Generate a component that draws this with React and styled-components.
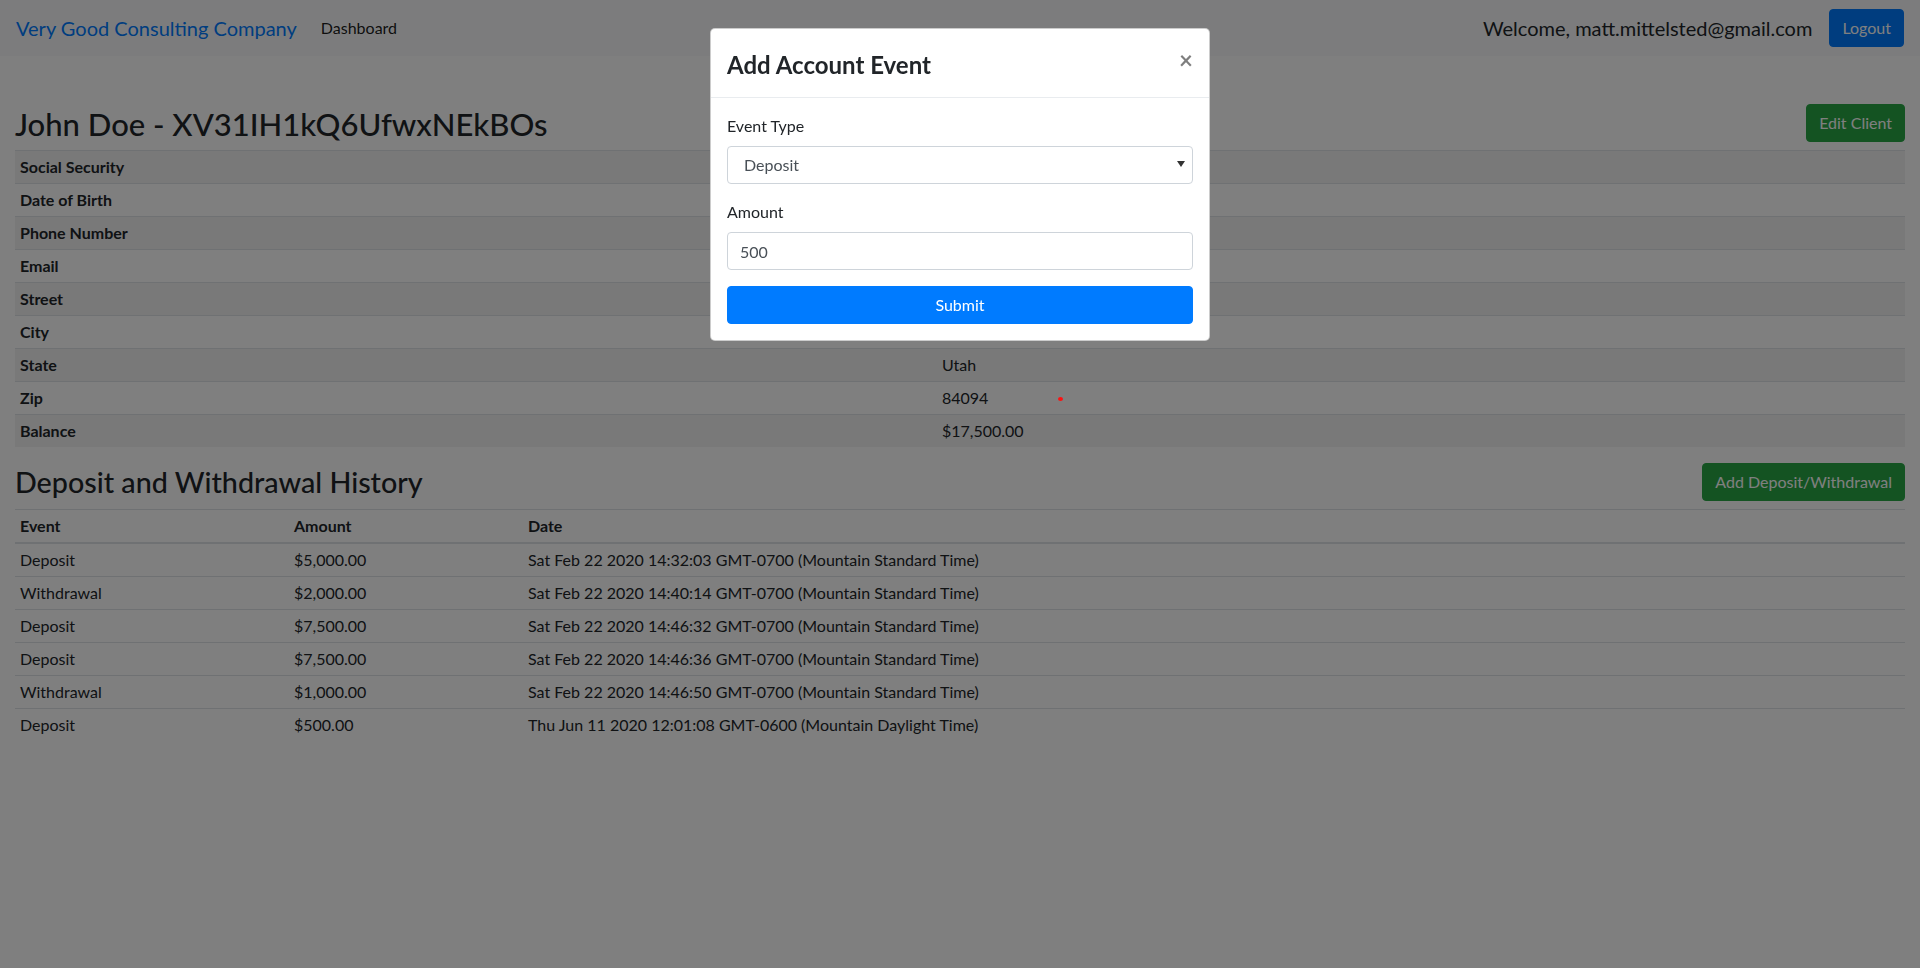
import React from "react";
import styled, { createGlobalStyle, css } from "styled-components";

const GlobalStyle = createGlobalStyle`
  *, *::before, *::after { box-sizing: border-box; }
  html, body { margin: 0; padding: 0; }
  body {
    font-family: Lato, "Open Sans", "Noto Sans", sans-serif;
    font-size: 16px;
    line-height: 1.5;
    color: #212529;
    background: #fff;
  }
`;

const Navbar = styled.nav`
  display: flex;
  align-items: center;
  height: 56px;
  padding: 8px 16px;
  background: #f8f9fa;
`;

const Brand = styled.a`
  font-size: 20px;
  line-height: 30px;
  color: #007bff;
  margin-right: 16px;
  text-decoration: none;
`;

const NavLink = styled.a`
  padding: 8px;
  color: rgba(0, 0, 0, 0.9);
  text-decoration: none;
`;

const NavRight = styled.div`
  margin-left: auto;
  display: flex;
  align-items: center;
  gap: 17px;
`;

const Welcome = styled.span`
  font-size: 20px;
  line-height: 30px;
`;

const variants = {
  primary: "#007bff",
  success: "#28a745",
};

const Button = styled.button`
  font-family: inherit;
  font-size: 16px;
  line-height: 24px;
  padding: 6px 12px;
  border-radius: 4px;
  border: 1px solid ${(p) => variants[p.$variant]};
  background: ${(p) => variants[p.$variant]};
  color: #fff;
  cursor: pointer;
  white-space: nowrap;
`;

const Main = styled.main`
  padding: 48px 15px 0;
`;

const SectionHeader = styled.div`
  display: flex;
  align-items: center;
  justify-content: space-between;
  height: 38px;
  margin-bottom: 8px;
`;

const Title = styled.h2`
  margin: 0;
  font-weight: 500;
  line-height: 1.2;
  padding-top: ${(p) => p.$nudge || 0}px;
  font-size: ${(p) => p.$size}px;
`;

const Table = styled.table`
  width: 100%;
  border-collapse: collapse;
  margin-bottom: 16px;
`;

const cellBase = css`
  padding: 4px 5px;
  border-top: 1px solid #dee2e6;
  text-align: left;
  vertical-align: top;
  line-height: 24px;
`;

const InfoRow = styled.tr`
  background: ${(p) => (p.$odd ? "rgba(0,0,0,0.05)" : "transparent")};
`;

const LabelCell = styled.th`
  ${cellBase};
  width: 922px;
  font-weight: 700;
`;

const ValueCell = styled.td`
  ${cellBase};
  position: relative;
`;

const RedDot = styled.span`
  position: absolute;
  left: 121px;
  top: 15px;
  width: 5px;
  height: 4px;
  border-radius: 50%;
  background: #ff1010;
  z-index: 1060;
`;

const HeadCell = styled.th`
  ${cellBase};
  font-weight: 700;
  vertical-align: bottom;
  border-bottom: 2px solid #dee2e6;
  width: ${(p) => (p.$w ? `${p.$w}px` : "auto")};
`;

const Cell = styled.td`
  ${cellBase};
`;

const Backdrop = styled.div`
  position: fixed;
  inset: 0;
  background: #000;
  opacity: 0.5;
  z-index: 1040;
`;

const ModalLayer = styled.div`
  position: fixed;
  inset: 0;
  z-index: 1050;
  overflow: auto;
`;

const Dialog = styled.div`
  width: 500px;
  margin: 28px auto;
  background: #fff;
  border: 1px solid rgba(0, 0, 0, 0.2);
  border-radius: 5px;
`;

const ModalHeader = styled.div`
  display: flex;
  align-items: flex-start;
  padding: 16px;
  border-bottom: 1px solid #e9ecef;
`;

const ModalTitle = styled.h4`
  margin: 0;
  font-size: 24px;
  font-weight: 700;
  line-height: 36px;
  padding-top: 2px;
  height: 36px;
`;

const CloseButton = styled.button`
  margin: -16px -16px -16px auto;
  padding: 19px 16px 16px;
  background: transparent;
  border: 0;
  font-family: inherit;
  font-size: 24px;
  font-weight: 700;
  line-height: 1;
  color: #000;
  opacity: 0.5;
  cursor: pointer;
`;

const ModalBody = styled.div`
  padding: 16px;
`;

const FormGroup = styled.div`
  margin-bottom: 16px;
`;

const Label = styled.label`
  display: block;
  margin-bottom: 8px;
`;

const fieldBase = css`
  display: block;
  width: 100%;
  height: 38px;
  font-family: inherit;
  font-size: 16px;
  line-height: 24px;
  color: #495057;
  background: #fff;
  border: 1px solid #ced4da;
  border-radius: 4px;
  outline: none;
`;

const SelectWrap = styled.div`
  position: relative;
`;

const Select = styled.select`
  ${fieldBase};
  appearance: none;
  padding: 6px 28px 6px 16px;
`;

const SelectArrow = styled.svg`
  position: absolute;
  right: 8px;
  top: 15px;
  pointer-events: none;
`;

const Input = styled.input`
  ${fieldBase};
  padding: 6px 12px;
`;

const SubmitButton = styled(Button)`
  display: block;
  width: 100%;
  height: 38px;
`;

const info = [
  ["Social Security", "123-45-6789"],
  ["Date of Birth", "01/01/1980"],
  ["Phone Number", "(801) 555-1234"],
  ["Email", "john.doe@example.com"],
  ["Street", "123 Main Street"],
  ["City", "Sandy"],
  ["State", "Utah"],
  ["Zip", "84094"],
  ["Balance", "$17,500.00"],
];

const history = [
  ["Deposit", "$5,000.00", "Sat Feb 22 2020 14:32:03 GMT-0700 (Mountain Standard Time)"],
  ["Withdrawal", "$2,000.00", "Sat Feb 22 2020 14:40:14 GMT-0700 (Mountain Standard Time)"],
  ["Deposit", "$7,500.00", "Sat Feb 22 2020 14:46:32 GMT-0700 (Mountain Standard Time)"],
  ["Deposit", "$7,500.00", "Sat Feb 22 2020 14:46:36 GMT-0700 (Mountain Standard Time)"],
  ["Withdrawal", "$1,000.00", "Sat Feb 22 2020 14:46:50 GMT-0700 (Mountain Standard Time)"],
  ["Deposit", "$500.00", "Thu Jun 11 2020 12:01:08 GMT-0600 (Mountain Daylight Time)"],
];

export default function App() {
  return (
    <>
      <GlobalStyle />
      <Navbar>
        <Brand href="#">Very Good Consulting Company</Brand>
        <NavLink href="#">Dashboard</NavLink>
        <NavRight>
          <Welcome>Welcome, matt.mittelsted@gmail.com</Welcome>
          <Button $variant="primary">Logout</Button>
        </NavRight>
      </Navbar>
      <Main>
        <SectionHeader>
          <Title $size={31} $nudge={3}>John Doe - XV31IH1kQ6UfwxNEkBOs</Title>
          <Button $variant="success">Edit Client</Button>
        </SectionHeader>
        <Table>
          <tbody>
            {info.map(([k, v], i) => (
              <InfoRow key={k} $odd={i % 2 === 0}>
                <LabelCell>{k}</LabelCell>
                <ValueCell>
                  {v}
                  {k === "Zip" && <RedDot />}
                </ValueCell>
              </InfoRow>
            ))}
          </tbody>
        </Table>
        <SectionHeader>
          <Title as="h3" $size={28.7}>Deposit and Withdrawal History</Title>
          <Button $variant="success">Add Deposit/Withdrawal</Button>
        </SectionHeader>
        <Table>
          <thead>
            <tr>
              <HeadCell $w={274}>Event</HeadCell>
              <HeadCell $w={234}>Amount</HeadCell>
              <HeadCell>Date</HeadCell>
            </tr>
          </thead>
          <tbody>
            {history.map(([e, a, d], i) => (
              <tr key={i}>
                <Cell>{e}</Cell>
                <Cell>{a}</Cell>
                <Cell>{d}</Cell>
              </tr>
            ))}
          </tbody>
        </Table>
      </Main>
      <Backdrop />
      <ModalLayer>
        <Dialog>
          <ModalHeader>
            <ModalTitle>Add Account Event</ModalTitle>
            <CloseButton aria-label="Close">×</CloseButton>
          </ModalHeader>
          <ModalBody>
            <FormGroup>
              <Label>Event Type</Label>
              <SelectWrap>
                <Select defaultValue="Deposit">
                  <option>Deposit</option>
                  <option>Withdrawal</option>
                </Select>
                <SelectArrow width="8" height="6" viewBox="0 0 8 6">
                  <path d="M0 0 L8 0 L4 6 Z" fill="#333" />
                </SelectArrow>
              </SelectWrap>
            </FormGroup>
            <FormGroup>
              <Label>Amount</Label>
              <Input defaultValue="500" />
            </FormGroup>
            <SubmitButton $variant="primary">Submit</SubmitButton>
          </ModalBody>
        </Dialog>
      </ModalLayer>
    </>
  );
}
